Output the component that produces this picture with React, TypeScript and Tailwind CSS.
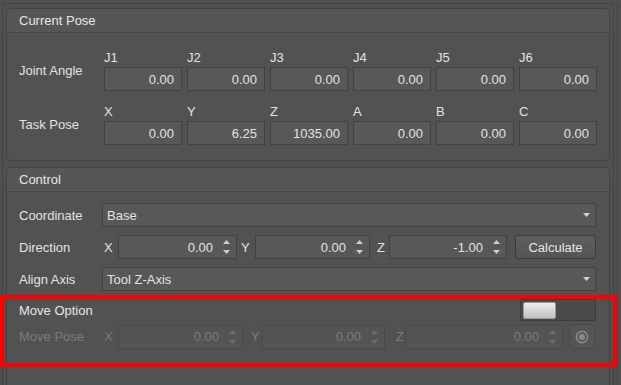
import React from "react";

const joints = [
  { label: "J1", value: "0.00" },
  { label: "J2", value: "0.00" },
  { label: "J3", value: "0.00" },
  { label: "J4", value: "0.00" },
  { label: "J5", value: "0.00" },
  { label: "J6", value: "0.00" },
];

const task = [
  { label: "X", value: "0.00" },
  { label: "Y", value: "6.25" },
  { label: "Z", value: "1035.00" },
  { label: "A", value: "0.00" },
  { label: "B", value: "0.00" },
  { label: "C", value: "0.00" },
];

const Arrows = ({ disabled }: { disabled?: boolean }) => (
  <div className="w-[8px] ml-[9px] mr-[6px] flex flex-col items-center gap-[6px]">
    <svg width="7" height="4" viewBox="0 0 7 4">
      <path d="M0 4 L3.5 0 L7 4 Z" fill={disabled ? "#6e6e6e" : "#cfcfcf"} />
    </svg>
    <svg width="7" height="4" viewBox="0 0 7 4">
      <path d="M0 0 L3.5 4 L7 0 Z" fill={disabled ? "#6e6e6e" : "#cfcfcf"} />
    </svg>
  </div>
);

const SpinBox = ({ value, width, disabled }: { value: string; width: string; disabled?: boolean }) => (
  <div
    className={
      disabled
        ? `${width} h-[24px] flex items-center border border-[#4a4a4a] bg-[#545454] text-[#7b7b7b]`
        : `${width} h-[24px] flex items-center border border-[#424242] bg-[#585858] text-[#e2e2e2]`
    }
  >
    <span className="flex-1 text-right">{value}</span>
    <Arrows disabled={disabled} />
  </div>
);

const Combo = ({ text }: { text: string }) => (
  <div className="flex-1 h-[24px] flex items-center justify-between border border-[#424242] bg-[#585858] pl-[4px] pr-[5px]">
    <span className="text-[#e2e2e2]">{text}</span>
    <svg width="7" height="4" viewBox="0 0 7 4">
      <path d="M0 0 L3.5 4 L7 0 Z" fill="#d0d0d0" />
    </svg>
  </div>
);

const PoseRow = ({ title, items }: { title: string; items: { label: string; value: string }[] }) => (
  <div className="flex items-center">
    <div className="w-[85px] text-[#e2e2e2]">{title}</div>
    <div className="flex gap-[5px]">
      {items.map((it) => (
        <div key={it.label} className="w-[78px] flex flex-col">
          <div className="h-[15px] leading-[15px] text-[#e2e2e2] mb-[2px]">{it.label}</div>
          <div className="h-[24px] flex items-center justify-end pr-[7px] border border-[#424242] bg-[#585858] text-[#e2e2e2]">
            {it.value}
          </div>
        </div>
      ))}
    </div>
  </div>
);

const Panel = ({ title, children, className }: { title: string; children: React.ReactNode; className: string }) => (
  <div className={`shrink-0 border border-[#444444] rounded-[4px] bg-[#525252] ${className}`}>
    <div className="h-[24px] flex items-center pl-[12px] border-b border-[#474747] bg-[#565656] rounded-t-[4px] text-[#e6e6e6]">
      {title}
    </div>
    {children}
  </div>
);

export default function App() {
  return (
    <div
      className="relative w-[621px] h-[385px] overflow-hidden bg-[#505050] flex pl-[2px] pt-[3px] text-[13px] leading-[15px]"
      style={{ fontFamily: '"Liberation Sans", Arial, sans-serif' }}
    >
      <div className="w-[612px] h-[440px] shrink-0 border-l border-t border-r border-[#444444] p-[3px] pt-[4px] flex flex-col">
        <Panel title="Current Pose" className="h-[153px]">
          <div className="pl-[12px] pt-[17px] flex flex-col gap-[13px]">
            <PoseRow title="Joint Angle" items={joints} />
            <PoseRow title="Task Pose" items={task} />
          </div>
        </Panel>

        <Panel title="Control" className="mt-[6px] h-[260px]">
          <div className="pl-[12px] pr-[13px] pt-[11px] flex flex-col">
            <div className="flex items-center">
              <div className="w-[83px] text-[#e2e2e2]">Coordinate</div>
              <Combo text="Base" />
            </div>

            <div className="flex items-center mt-[8px] text-[#e2e2e2]">
              <div className="w-[85px]">Direction</div>
              <span className="w-[14px]">X</span>
              <SpinBox value="0.00" width="w-[119px]" />
              <span className="w-[18px] pl-[4px]">Y</span>
              <SpinBox value="0.00" width="w-[115px]" />
              <span className="w-[19px] pl-[7px]">Z</span>
              <SpinBox value="-1.00" width="w-[118px]" />
              <div className="ml-[8px] flex-1 h-[24px] flex items-center justify-center rounded-[3px] border border-[#3c3c3c] bg-gradient-to-b from-[#5e5e5e] to-[#545454] text-[#e6e6e6]">
                Calculate
              </div>
            </div>

            <div className="flex items-center mt-[8px]">
              <div className="w-[83px] text-[#e2e2e2]">Align Axis</div>
              <Combo text="Tool Z-Axis" />
            </div>

            <div className="flex items-center justify-between mt-[8px] h-[22px]">
              <div className="text-[#e6e6e6]">Move Option</div>
              <div className="w-[76px] h-[22px] flex items-center border border-[#3d3d3d] bg-[#4a4a4a] rounded-[2px]">
                <div className="ml-[2px] w-[33px] h-[17px] rounded-[2px] border border-[#9c9c9c] bg-gradient-to-b from-[#ececec] to-[#c2c2c2]" />
              </div>
            </div>

            <div className="flex items-center mt-[3px] text-[#7b7b7b]">
              <div className="w-[85px]">Move Pose</div>
              <span className="w-[14px]">X</span>
              <SpinBox value="0.00" width="w-[125px]" disabled />
              <span className="w-[19px] pl-[8px]">Y</span>
              <SpinBox value="0.00" width="w-[123px]" disabled />
              <span className="w-[20px] pl-[11px]">Z</span>
              <SpinBox value="0.00" width="w-[158px]" disabled />
              <div className="ml-[6px] w-[26px] h-[25px] flex items-center justify-center rounded-[3px] border border-[#4a4a4a] bg-[#555555]">
                <svg width="14" height="14" viewBox="0 0 14 14">
                  <circle cx="7" cy="7" r="5.6" fill="none" stroke="#8a8a8a" strokeWidth="1.6" />
                  <circle cx="7" cy="7" r="3" fill="#8a8a8a" />
                </svg>
              </div>
            </div>
          </div>
        </Panel>
      </div>
      <div className="ml-[3px] w-px h-[440px] shrink-0 bg-[#444444]" />

      <div className="absolute left-0 top-[295px] w-[617px] h-[72px] border-4 border-[#ff0000]" />
    </div>
  );
}
